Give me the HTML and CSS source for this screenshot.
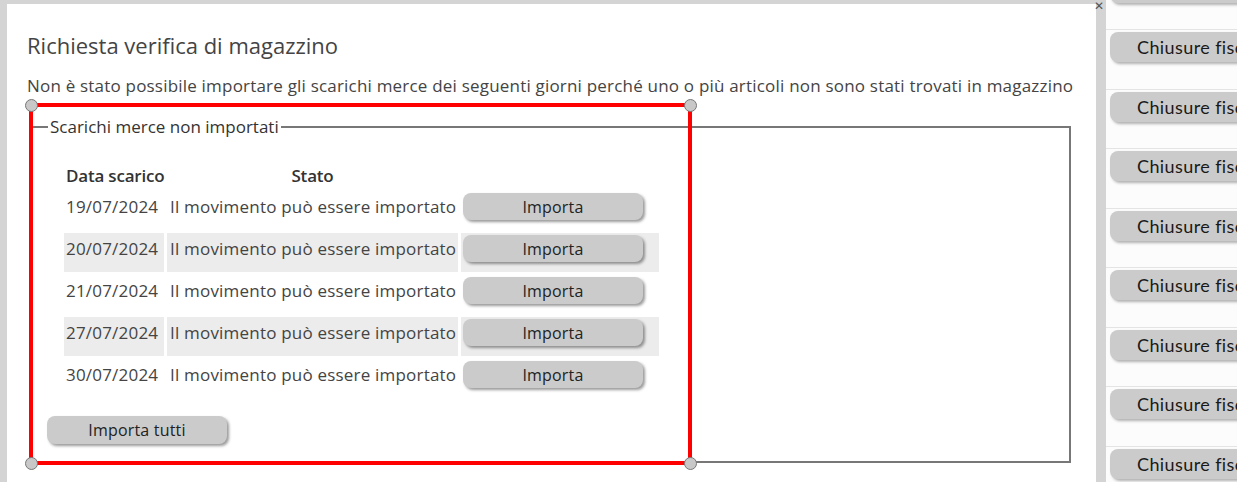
FILE: index.html
```html
<!DOCTYPE html>
<html lang="it">
<head>
    <meta charset="UTF-8">
    <title>Richiesta verifica di magazzino</title>
    <link rel="stylesheet" href="styles.css">
</head>
<body>
    <div class="modal">
        <span class="close-btn">✕</span>
        <h2 class="modal-title">Richiesta verifica di magazzino</h2>
        <p class="modal-text">Non è stato possibile importare gli scarichi merce dei seguenti giorni perché uno o più articoli non sono stati trovati in magazzino</p>
        <fieldset class="box">
            <legend>Scarichi merce non importati</legend>
            <table class="scarichi">
                <thead>
                    <tr>
                        <th class="col-data">Data scarico</th>
                        <th class="col-stato">Stato</th>
                        <th class="col-azione"></th>
                    </tr>
                </thead>
                <tbody>
                    <tr>
                        <td>19/07/2024</td>
                        <td>Il movimento può essere importato</td>
                        <td><button class="btn">Importa</button></td>
                    </tr>
                    <tr class="alt">
                        <td>20/07/2024</td>
                        <td>Il movimento può essere importato</td>
                        <td><button class="btn">Importa</button></td>
                    </tr>
                    <tr>
                        <td>21/07/2024</td>
                        <td>Il movimento può essere importato</td>
                        <td><button class="btn">Importa</button></td>
                    </tr>
                    <tr class="alt">
                        <td>27/07/2024</td>
                        <td>Il movimento può essere importato</td>
                        <td><button class="btn">Importa</button></td>
                    </tr>
                    <tr>
                        <td>30/07/2024</td>
                        <td>Il movimento può essere importato</td>
                        <td><button class="btn">Importa</button></td>
                    </tr>
                </tbody>
            </table>
            <button class="btn btn-all">Importa tutti</button>
        </fieldset>

        <!-- selection frame drawn over the fieldset -->
        <div class="selection">
            <span class="handle tl"></span>
            <span class="handle tr"></span>
            <span class="handle bl"></span>
            <span class="handle br"></span>
        </div>
    </div>

    <div class="side">
        <div class="side-list">
            <div class="side-row"><button class="side-btn">Chiusure fiscali</button></div>
            <div class="side-row"><button class="side-btn">Chiusure fiscali</button></div>
            <div class="side-row"><button class="side-btn">Chiusure fiscali</button></div>
            <div class="side-row"><button class="side-btn">Chiusure fiscali</button></div>
            <div class="side-row"><button class="side-btn">Chiusure fiscali</button></div>
            <div class="side-row"><button class="side-btn">Chiusure fiscali</button></div>
            <div class="side-row"><button class="side-btn">Chiusure fiscali</button></div>
            <div class="side-row"><button class="side-btn">Chiusure fiscali</button></div>
            <div class="side-row"><button class="side-btn">Chiusure fiscali</button></div>
        </div>
    </div>
</body>
</html>
```

FILE: styles.css
```css
body {
    margin: 0;
    height: 482px;
    overflow: hidden;
    display: flex;
    align-items: flex-start;
    background: #d4d4d4;
    font-family: 'Open Sans', 'Noto Sans', Arial, sans-serif;
    color: #444;
}
.modal {
    position: relative;
    width: 1089px;
    height: 478px;
    margin: 4px 0 0 7px;
    padding: 0 20px;
    box-sizing: border-box;
    background: #fff;
}
.close-btn {
    position: absolute;
    top: -7px;
    right: -8px;
    font-size: 12px;
    color: #555;
}
.modal-title {
    margin: 0;
    padding-top: 27px;
    font-size: 22px;
    font-weight: 400;
    line-height: 28px;
    color: #444;
}
.modal-text {
    margin: 16px 0 0 0;
    font-size: 17px;
    letter-spacing: 0.2px;
    line-height: 22px;
    color: #444;
    white-space: nowrap;
}
.box {
    margin: 19px 5px 0 4px;
    padding: 23px 10px 17px 14px;
    border: 2px solid #777;
}
.box legend {
    padding: 0 2px;
    margin-left: 1px;
    font-size: 17px;
    line-height: 22px;
    color: #333;
}
.scarichi {
    table-layout: fixed;
    width: 601px;
    border-spacing: 3px;
    margin: 0 0 0 14px;
    font-size: 17px;
    letter-spacing: 0.2px;
    color: #444;
}
.scarichi th {
    font-weight: 600;
    height: 24px;
    padding: 0;
    line-height: 24px;
    letter-spacing: -0.2px;
    color: #333;
    white-space: nowrap;
}
.scarichi th.col-data {
    width: 100px;
    text-align: left;
    padding-left: 2px;
    box-sizing: border-box;
}
.scarichi th.col-stato { width: 291px; }
.scarichi th.col-azione { width: 198px; }
.scarichi td {
    height: 39px;
    box-sizing: border-box;
    padding: 2px 2px 0 2px;
    vertical-align: top;
    line-height: 27px;
    white-space: nowrap;
    overflow: visible;
}
.scarichi td:nth-child(2) { padding-left: 3px; }
.scarichi tr.alt td {
    background: #ececec;
}
.btn {
    display: block;
    width: 180px;
    height: 27px;
    border: none;
    border-radius: 8px;
    background: #cbcbcb;
    box-shadow: 2px 2px 3px rgba(0, 0, 0, 0.4);
    font-family: inherit;
    font-size: 16px;
    letter-spacing: 0.2px;
    color: #222;
    cursor: pointer;
}
.btn-all {
    height: 28px;
    margin-top: 15px;
}
.selection {
    position: absolute;
    left: 22px;
    top: 99px;
    width: 663px;
    height: 362px;
    box-sizing: border-box;
    border: 4px solid #f00;
    pointer-events: none;
}
.handle {
    position: absolute;
    width: 13px;
    height: 13px;
    box-sizing: border-box;
    border-radius: 50%;
    background: #c8c8c8;
    border: 1.5px solid #777;
}
.handle.tl { left: -8.5px; top: -8.5px; }
.handle.tr { right: -8.5px; top: -8.5px; }
.handle.bl { left: -8.5px; bottom: -8.5px; }
.handle.br { right: -8.5px; bottom: -8.5px; }
.side {
    flex: 1;
    height: 482px;
    margin-left: 10px;
    background: #fcfcfc;
    overflow: hidden;
}
.side-list {
    margin-top: -30.5px;
}
.side-row {
    height: 59.5px;
    box-sizing: border-box;
    border-top: 1px solid #e4e4e4;
    padding: 2px 0 0 4px;
}
.side-btn {
    width: 200px;
    height: 30px;
    border: none;
    border-radius: 8px;
    background: #cbcbcb;
    box-shadow: 2px 2px 3px rgba(0, 0, 0, 0.3);
    padding: 0 0 0 27px;
    text-align: left;
    font-family: 'Lato', 'Open Sans', sans-serif;
    font-size: 18px;
    letter-spacing: 0.4px;
    color: #1a1a1a;
    white-space: nowrap;
}
```
